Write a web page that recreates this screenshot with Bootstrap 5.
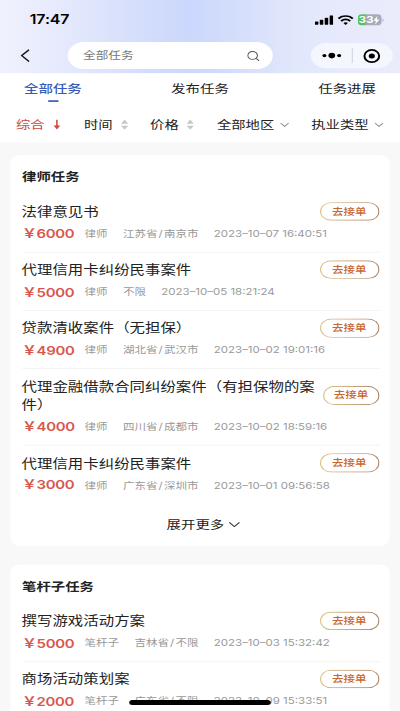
<!DOCTYPE html>
<html lang="zh-CN">
<head>
<meta charset="utf-8">
<meta name="viewport" content="width=device-width, initial-scale=1">
<title>全部任务</title>
<link href="https://cdn.jsdelivr.net/npm/bootstrap@5.3.0/dist/css/bootstrap.min.css" rel="stylesheet">
<style>
  html, body { margin: 0; height: 711px; overflow: hidden; }
  body { font-family: Inter, "Noto Sans CJK SC", sans-serif; background: #f8f8f8; color: #222; }
  /* 390x844 phone layout fitted to the 400x711 window */
  .viewport { width: 400px; height: 711px; }
  .phone { width: 390px; height: 844px; transform: scale(1.02564, .84242); transform-origin: 0 0; background: #f8f8f8; }
  .phone svg { display: block; flex: none; }
  .top-bar { height: 87px; background: linear-gradient(90deg, #f0f1fd 0%, #e3e8fc 18%, #d2dcfb 38%, #cbd7fc 48%, #d5defb 60%, #e2e8fc 75%, #ebecfb 100%); }
  .status { height: 47px; padding: 0 15.5px 0 29px; }
  .clock { font-size: 15.5px; font-weight: 600; color: #000; line-height: 20px; letter-spacing: -.1px; }
  .battery { width: 23px; height: 13px; border-radius: 4px; background: linear-gradient(90deg, #55c162 33%, #a7abba 33%); color: #fff; font-size: 11px; font-weight: 700; line-height: 13px; }
  .tools { height: 40px; padding: 3px 7.5px 5px 20px; }
  .search { width: 200px; height: 32px; margin-left: 37px; padding: 0 13px 0 15px; background: #fff; font-size: 12.3px; color: #777; }
  .capsule { width: 80px; height: 30px; padding: 0 11.5px 0 11px; background: #f5f7fe; }
  .capsule-line { width: 1px; height: 18px; background: #d0d2dc; }
  .tabs { height: 35px; padding: 6.5px 23.4px 0; font-size: 14.1px; line-height: 22px; }
  .tab-on { color: #3a5cb8; font-weight: 500; }
  .tab-on::after { content: ""; display: block; width: 10px; height: 2px; margin: 3.5px auto 0; background: #3a5cb8; }
  .filters { height: 47px; padding: 4px 15.5px 0; font-size: 14px; line-height: 22px; }
  .f-hot { color: #d0453c; width: 66.4px; }
  .f-sort { width: 64.4px; }
  .f-price { width: 65.2px; }
  .f-area { width: 92px; }
  .panel { margin: 0 10px; padding: 0 10.5px 0 11.5px; border-radius: 10px; background: #fff; }
  .panel-title { height: 46.5px; padding-top: 15px; font-size: 14px; font-weight: 700; line-height: 22px; }
  .task { padding: 9.5px 0 11.2px; border-bottom: 1px solid #f1f1f1; }
  .task.last { border-color: transparent; }
  .task-name { font-size: 15.05px; line-height: 22px; max-width: 294px; margin-left: -.5px; }
  .meta { margin-top: 5.5px; height: 20px; gap: 15px; font-size: 11.2px; color: #999; }
  .slash { padding: 0 1.2px; }
  .price { width: 46px; font-size: 14.5px; font-weight: 600; color: #d8574c; letter-spacing: -.3px; }
  .take { width: 58px; height: 22.6px; margin: -1px 0; border: 1px solid transparent; border-radius: 12px; font-size: 11.2px; font-weight: 500; color: #c9652f;
          background: linear-gradient(#fff, #fff) padding-box, linear-gradient(90deg, #dcc084, #a98468) border-box; }
  .take.narrow { width: 54.6px; }
  .more { height: 50px; padding: 0 0 2px 5px; font-size: 14.1px; gap: 4px; }
  .home-bar { left: 126px; top: 831px; width: 138px; height: 6px; border-radius: 3px; background: #000; }
</style>
</head>
<body>
<div class="viewport overflow-hidden">
<div class="phone position-relative overflow-hidden text-nowrap">
  <header class="top-bar">
    <div class="status d-flex align-items-center justify-content-between">
      <span class="clock">17:47</span>
      <div class="d-flex align-items-center">
        <svg width="18" height="12" viewBox="0 0 18 12"><rect x="0" y="7.5" width="3.4" height="4" rx="1"/><rect x="4.8" y="5.3" width="3.4" height="6.2" rx="1"/><rect x="9.6" y="3" width="3.4" height="8.5" rx="1"/><rect x="14.4" y="0" width="3.4" height="11.5" rx="1"/></svg>
        <svg class="ms-1" width="16" height="12" viewBox="0 0 16 12" fill="none" stroke="#000" stroke-width="2.1"><path d="M1 4.2C5-.1 11-.1 15 4.2M3.6 7C6.2 4.4 9.8 4.4 12.4 7"/><path d="M8 11.6 5.8 9.3C7 8.2 9 8.2 10.2 9.3Z" fill="#000" stroke="none"/></svg>
        <div class="battery d-flex align-items-center justify-content-center ms-1">33<svg width="6" height="10" viewBox="0 0 6 10" fill="#fff"><path d="M4 0 0 5.6h2.5L1.8 10 6 4.2H3.5Z"/></svg></div>
        <svg width="3" height="6" viewBox="0 0 3 6"><path d="M1 1q2 2 0 4Z" fill="#a7abba"/></svg>
      </div>
    </div>
    <div class="tools d-flex align-items-center">
      <svg width="9" height="16" viewBox="0 0 9 16" fill="none" stroke="#111" stroke-width="1.5"><path d="M8.3 1 1.2 8l7.1 7"/></svg>
      <div class="search rounded-pill d-flex align-items-center justify-content-between">全部任务
        <svg width="12" height="13" viewBox="0 0 12 13" fill="none" stroke="#555" stroke-width="1"><circle cx="5.3" cy="5.8" r="4.7"/><path d="m8.7 9.3 3 3"/></svg>
      </div>
      <div class="capsule rounded-pill d-flex align-items-center justify-content-between ms-auto">
        <svg width="19" height="8" viewBox="0 0 19 8"><circle cx="2.3" cy="4" r="2"/><circle cx="9.5" cy="4" r="3.3"/><circle cx="16.7" cy="4" r="2"/></svg>
        <span class="capsule-line"></span>
        <svg width="17" height="17" viewBox="0 0 17 17"><circle cx="8.5" cy="8.5" r="7.2" fill="none" stroke="#000" stroke-width="2"/><circle cx="8.5" cy="8.5" r="3"/></svg>
      </div>
    </div>
  </header>

  <nav class="bg-white">
    <div class="tabs d-flex justify-content-between"><span class="tab-on">全部任务</span><span>发布任务</span><span>任务进展</span></div>
    <div class="filters d-flex align-items-center">
      <div class="f-hot d-flex align-items-center">综合<svg class="ms-2" width="7" height="12" viewBox="0 0 7 12" fill="none" stroke="#d0453c" stroke-width="1.5"><path d="M3.5 0v10"/><path d="M.3 7h6.4L3.5 11.8Z" fill="#d0453c" stroke="none"/></svg></div>
      <div class="f-sort d-flex align-items-center">时间<svg class="ms-2" width="7" height="12" viewBox="0 0 7 12" fill="#c8c8c8"><path d="M0 5 3.5 0 7 5ZM0 7.2h7L3.5 12Z"/></svg></div>
      <div class="f-price d-flex align-items-center">价格<svg class="ms-2" width="7" height="12" viewBox="0 0 7 12" fill="#c8c8c8"><path d="M0 5 3.5 0 7 5ZM0 7.2h7L3.5 12Z"/></svg></div>
      <div class="f-area d-flex align-items-center">全部地区<svg style="margin-left:6px" width="9" height="6" viewBox="0 0 9 6" fill="none" stroke="#888"><path d="m.5 1 4 4 4-4"/></svg></div>
      <div class="d-flex align-items-center">执业类型<svg style="margin-left:6px" width="9" height="6" viewBox="0 0 9 6" fill="none" stroke="#888"><path d="m.5 1 4 4 4-4"/></svg></div>
    </div>
  </nav>

  <main class="d-flex flex-column" style="gap:21.5px;padding-top:15px">
    <section class="panel">
      <h2 class="panel-title m-0">律师任务</h2>
      <article class="task">
        <div class="d-flex align-items-center justify-content-between"><span class="task-name">法律意见书</span><span class="take d-flex align-items-center justify-content-center">去接单</span></div>
        <div class="meta d-flex align-items-center"><span class="price">￥6000</span><span>律师</span><span>江苏省<span class="slash">/</span>南京市</span><span>2023–10–07 16:40:51</span></div>
      </article>
      <article class="task">
        <div class="d-flex align-items-center justify-content-between"><span class="task-name">代理信用卡纠纷民事案件</span><span class="take d-flex align-items-center justify-content-center">去接单</span></div>
        <div class="meta d-flex align-items-center"><span class="price">￥5000</span><span>律师</span><span>不限</span><span>2023–10–05 18:21:24</span></div>
      </article>
      <article class="task">
        <div class="d-flex align-items-center justify-content-between"><span class="task-name">贷款清收案件（无担保）</span><span class="take d-flex align-items-center justify-content-center">去接单</span></div>
        <div class="meta d-flex align-items-center"><span class="price">￥4900</span><span>律师</span><span>湖北省<span class="slash">/</span>武汉市</span><span>2023–10–02 19:01:16</span></div>
      </article>
      <article class="task">
        <div class="d-flex align-items-center justify-content-between"><span class="task-name text-wrap">代理金融借款合同纠纷案件（有担保物的案件）</span><span class="take narrow d-flex align-items-center justify-content-center">去接单</span></div>
        <div class="meta d-flex align-items-center"><span class="price">￥4000</span><span>律师</span><span>四川省<span class="slash">/</span>成都市</span><span>2023–10–02 18:59:16</span></div>
      </article>
      <article class="task last">
        <div class="d-flex align-items-center justify-content-between"><span class="task-name">代理信用卡纠纷民事案件</span><span class="take d-flex align-items-center justify-content-center">去接单</span></div>
        <div class="meta d-flex align-items-center"><span class="price">￥3000</span><span>律师</span><span>广东省<span class="slash">/</span>深圳市</span><span>2023–10–01 09:56:58</span></div>
      </article>
      <div class="more d-flex align-items-center justify-content-center">展开更多<svg width="11" height="7" viewBox="0 0 11 7" fill="none" stroke="#333" stroke-width="1.1"><path d="m.5 1 5 5 5-5"/></svg></div>
    </section>

    <section class="panel">
      <h2 class="panel-title m-0">笔杆子任务</h2>
      <article class="task">
        <div class="d-flex align-items-center justify-content-between"><span class="task-name">撰写游戏活动方案</span><span class="take d-flex align-items-center justify-content-center">去接单</span></div>
        <div class="meta d-flex align-items-center"><span class="price">￥5000</span><span>笔杆子</span><span>吉林省<span class="slash">/</span>不限</span><span>2023–10–03 15:32:42</span></div>
      </article>
      <article class="task">
        <div class="d-flex align-items-center justify-content-between"><span class="task-name">商场活动策划案</span><span class="take d-flex align-items-center justify-content-center">去接单</span></div>
        <div class="meta d-flex align-items-center"><span class="price">￥2000</span><span>笔杆子</span><span>广东省<span class="slash">/</span>不限</span><span>2023–10–09 15:33:51</span></div>
      </article>
    </section>
  </main>
  <div class="home-bar position-absolute"></div>
</div>
</div>
<script src="https://cdn.jsdelivr.net/npm/bootstrap@5.3.0/dist/js/bootstrap.bundle.min.js"></script>
</body>
</html>
